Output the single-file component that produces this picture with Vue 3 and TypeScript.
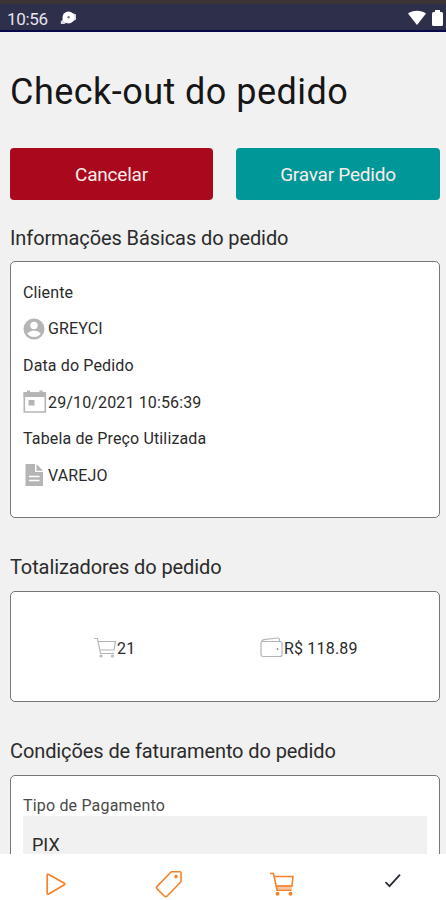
<script setup lang="ts">
interface InfoRow {
  label: string
  value: string
  icon: 'user' | 'calendar' | 'file'
}

const infoRows: InfoRow[] = [
  { label: 'Cliente', value: 'GREYCI', icon: 'user' },
  { label: 'Data do Pedido', value: '29/10/2021 10:56:39', icon: 'calendar' },
  { label: 'Tabela de Preço Utilizada', value: 'VAREJO', icon: 'file' },
]
</script>

<template>
  <div class="screen">
    <header class="status">
      <span class="clock">10:56</span>
      <svg class="notice" width="17" height="16" viewBox="0 0 17 16">
        <path d="M3.500 8.500.8 11.500V14H4.500L7 12zM13 3.500l3 .7v5.600L13 11z" fill="#d9d9e2" />
        <circle cx="8.500" cy="7.500" r="6" fill="#fff" />
        <circle cx="8.600" cy="7.300" r="1.200" fill="#77788e" />
      </svg>
      <svg class="wifi" width="18" height="16" viewBox="0 0 18 16">
        <path d="M0 3.600C5-.2 13-.2 18 3.600L9 15z" fill="#fff" />
      </svg>
      <svg class="battery" width="11" height="16" viewBox="0 0 11 16">
        <path d="M3 0h5v2h1.500Q11 2 11 3.500v11Q11 16 9.500 16h-8Q0 16 0 14.500v-11Q0 2 1.500 2H3z" fill="#fff" />
      </svg>
    </header>

    <main class="content">
      <h1>Check-out do pedido</h1>
      <div class="actions">
        <button class="cancel" type="button"><span>Cancelar</span></button>
        <button class="save" type="button"><span>Gravar Pedido</span></button>
      </div>

      <h2 class="h-info">Informações Básicas do pedido</h2>
      <section class="card info">
        <template v-for="row in infoRows" :key="row.label">
          <div class="row"><span>{{ row.label }}</span></div>
          <div class="row">
            <svg v-if="row.icon === 'user'" class="glyph" viewBox="0 0 25 24">
              <circle cx="11" cy="12" r="10.500" fill="#b5b5b5" />
              <circle cx="11" cy="8.400" r="3.700" fill="#fff" />
              <path d="M4.200 16.500q2.800-3 6.800-3t6.800 3q-2.500 3.500-6.800 3.500t-6.800-3.500z" fill="#fff" />
            </svg>
            <svg v-else-if="row.icon === 'calendar'" class="glyph" viewBox="0 0 25 24">
              <path d="M1.300 3H22.300V22H1.300z" fill="none" stroke="#b5b5b5" stroke-width="1.600" />
              <path d="M.5 2.200H23V7H.5zM4 .5h3V3H4zM16.500.5h3V3h-3zM5.500 10h6v5.500h-6z" fill="#b5b5b5" />
            </svg>
            <svg v-else class="glyph" viewBox="0 0 25 24">
              <path d="M2.500 1h9.500v8h8v14H2.500zM13.500 1 20 7.700h-6.500z" fill="#b5b5b5" />
              <path d="M6 13.500h10.500M6 17.500h10.500" stroke="#fff" stroke-width="1.500" />
            </svg>
            <span>{{ row.value }}</span>
          </div>
        </template>
      </section>

      <h2 class="h-total">Totalizadores do pedido</h2>
      <section class="card totals">
        <div class="total">
          <svg width="23" height="22" viewBox="0 0 23 22" fill="none" stroke="#b5b5b5" stroke-width="1.200">
            <path d="M0 1.500h3.500L6.500 16.500H20M4 4.500H21.500L20 13H6" />
            <circle cx="7" cy="19" r="1" /><circle cx="18.500" cy="19" r="1" />
          </svg>
          <span>21</span>
        </div>
        <div class="total">
          <svg width="24" height="22" viewBox="0 0 24 22" fill="none" stroke="#b5b5b5" stroke-width="1.200">
            <rect x="1" y="4.500" width="21" height="15" rx="2" />
            <path d="M1.500 5Q2 3 4 2.700L17 1Q19.500.8 19.500 3V4.500" />
            <circle cx="17.500" cy="12" r=".9" fill="#888" stroke="none" />
          </svg>
          <span>R$ 118.89</span>
        </div>
      </section>

      <h2 class="h-billing">Condições de faturamento do pedido</h2>
      <section class="card billing">
        <div class="pay-label"><span>Tipo de Pagamento</span></div>
        <div class="select"><span>PIX</span></div>
      </section>
    </main>

    <nav class="tabs">
      <svg width="28" height="28" viewBox="0 0 28 28" fill="none" stroke="#f5812a" stroke-width="1.700" stroke-linejoin="round">
        <path d="M6.200 5.300Q6.200 3.600 7.800 4.400L23.300 13.200Q24.300 14 23.300 14.800L7.800 24Q6.200 24.800 6.200 23z" />
      </svg>
      <svg width="28" height="28" viewBox="0 0 28 28" fill="none" stroke="#f5812a" stroke-width="1.600" stroke-linejoin="round">
        <path d="M17.300 1.800H26Q27 1.800 27 2.800V11.800L13.200 26Q11.800 27.400 10.300 26L3.300 19.100Q1.800 17.600 3.300 16.100z" />
        <circle cx="22" cy="6.600" r="1" fill="#f5812a" />
      </svg>
      <svg width="28" height="28" viewBox="0 0 28 28" fill="none" stroke="#f5812a" stroke-width="1.600">
        <path d="M10 15H26.500L26 19.500H11z" fill="#fbc4a0" stroke="none" />
        <path d="M4 3.500H7.500L11 20.200H25.500M8 6.500H27L26 16H10.500" />
        <circle cx="11.500" cy="23.800" r="1.200" fill="#f5812a" /><circle cx="24.500" cy="23.800" r="1.200" fill="#f5812a" />
      </svg>
      <svg width="28" height="28" viewBox="0 0 28 28" fill="none" stroke="#2c2c39" stroke-width="1.800">
        <path d="m6.500 12.200 4 4L21 4.600" />
      </svg>
    </nav>
  </div>
</template>

<style>
body {
  background: #f1f1f1;
  overflow: hidden;
}
</style>

<style scoped>
* {
  box-sizing: border-box;
}
.screen {
  width: 446px;
  height: 900px;
  display: flex;
  flex-direction: column;
  overflow: hidden;
  background: #f1f1f1;
  color: #2b2b2b;
  font-family: Roboto, sans-serif;
}
span,
h1,
h2 {
  white-space: nowrap;
}
svg {
  display: block;
  flex: none;
}
.status {
  flex: none;
  height: 32px;
  display: flex;
  align-items: center;
  padding: 6px 3px 0 7px;
  border-top: 4px solid #3c3436;
  border-bottom: 2px solid #09084a;
  background: #2e2f4b;
}
.status > * {
  margin-top: -4px;
}
.clock {
  width: 53px;
  color: #e5e5ee;
  font-size: 17px;
  line-height: 20px;
  letter-spacing: -0.3px;
}
.status .clock {
  margin-top: -3px;
}
.wifi {
  margin-left: auto;
  margin-right: 6px;
}
.content {
  flex: 1;
  min-height: 0;
  overflow: hidden;
  padding: 38px 6px 0 10px;
}
h1,
h2 {
  margin: 0;
  font-weight: 400;
}
h1 {
  height: 44px;
  font-size: 36px;
  line-height: 44px;
  letter-spacing: 0.46px;
  color: #161616;
}
.actions {
  display: grid;
  grid-template-columns: 203px 204px;
  gap: 23px;
  margin-top: 34px;
}
button {
  height: 52px;
  border: 0;
  border-radius: 4px;
  padding: 2px 0 0;
  color: #fbecec;
  font: 400 19px/24px Roboto, sans-serif;
  letter-spacing: -0.22px;
}
.cancel {
  background: #aa081c;
}
.save {
  background: #009798;
}
h2 {
  height: 24px;
  font-size: 20px;
  line-height: 24px;
  letter-spacing: -0.1px;
}
.h-info {
  margin-top: 26px;
}
.h-total {
  margin-top: 37px;
}
.h-billing {
  margin-top: 37px;
}
.card {
  border: 1px solid #777;
  border-radius: 5px;
  background: #fff;
  padding: 12px 12px 11px;
}
.info {
  height: 257px;
  margin-top: 11px;
}
.row {
  height: 36.600px;
  display: flex;
  align-items: center;
  font-size: 16px;
  letter-spacing: 0.14px;
}
.glyph {
  width: 25px;
  height: 24px;
}
.totals {
  height: 111px;
  margin-top: 12px;
  display: flex;
  align-items: center;
  padding: 3px 0 0 83px;
}
.total {
  display: flex;
  align-items: center;
  width: 166px;
  font-size: 16px;
  letter-spacing: 0.18px;
}
.billing {
  height: 110px;
  margin-top: 12px;
  padding-top: 20px;
}
.pay-label {
  height: 20px;
  font-size: 16px;
  line-height: 20px;
  letter-spacing: 0.18px;
  color: #4a4a4a;
}
.select {
  height: 58px;
  padding: 0 9px;
  background: #f1f1f1;
  font-size: 18px;
  line-height: 58px;
}
.tabs {
  flex: none;
  height: 46px;
  display: flex;
  justify-content: space-between;
  padding: 16px 39px 0 41px;
  background: #fff;
}
</style>
